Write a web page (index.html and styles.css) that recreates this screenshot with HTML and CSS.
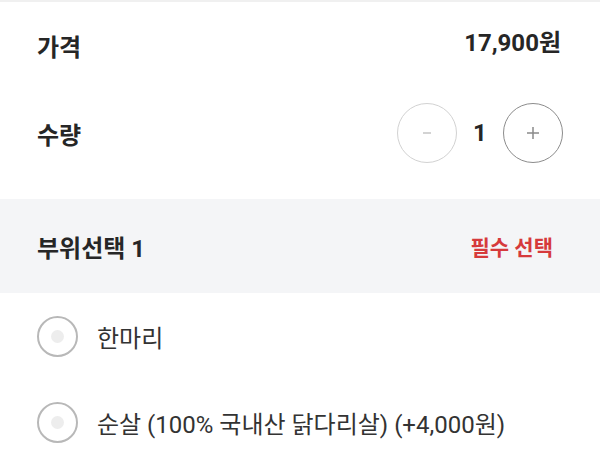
FILE: index.html
```html
<!DOCTYPE html>
<html lang="ko">
<head>
<meta charset="utf-8">
<link rel="stylesheet" href="styles.css">
</head>
<body>
<div class="page">
  <div class="row price-row">
    <span class="label">가격</span>
    <span class="price">17,900원</span>
  </div>
  <div class="row qty-row">
    <span class="label">수량</span>
    <div class="stepper">
      <button class="step step-minus" aria-label="감소">
        <svg width="12" height="12" viewBox="0 0 12 12"><line x1="2" y1="6" x2="10" y2="6" stroke="#c4c4c4" stroke-width="1.5"/></svg>
      </button>
      <span class="count">1</span>
      <button class="step step-plus" aria-label="증가">
        <svg width="14" height="14" viewBox="0 0 14 14"><line x1="1" y1="7" x2="13" y2="7" stroke="#8a8a8a" stroke-width="1.5"/><line x1="7" y1="1" x2="7" y2="13" stroke="#8a8a8a" stroke-width="1.5"/></svg>
      </button>
    </div>
  </div>
  <div class="section-head">
    <span class="section-title">부위선택 1</span>
    <span class="required">필수 선택</span>
  </div>
  <div class="options">
    <label class="option">
      <span class="radio"><span class="dot"></span></span>
      <span class="option-text">한마리</span>
    </label>
    <label class="option">
      <span class="radio"><span class="dot"></span></span>
      <span class="option-text">순살 (100% 국내산 닭다리살) (+4,000원)</span>
    </label>
  </div>
</div>
</body>
</html>
```

FILE: styles.css
```css
* { box-sizing: border-box; }
html, body {
  margin: 0;
  padding: 0;
  background: #ffffff;
}
body {
  font-family: Roboto, "Noto Sans CJK KR", "Noto Sans", sans-serif;
  color: #262626;
  width: 600px;
  height: 452px;
  overflow: hidden;
}
.page {
  border-top: 2px solid #f0f0f0;
}
.row {
  display: flex;
  align-items: center;
  justify-content: space-between;
  padding: 0 39px 0 37px;
}
.price-row { height: 86px; }
.qty-row { height: 90px; margin-bottom: 21px; padding-right: 37px; }
.label {
  font-size: 24px;
  font-weight: 700;
  color: #262626;
}
.price {
  font-size: 24px;
  font-weight: 700;
  margin-bottom: 10px;
  color: #262626;
}
.stepper {
  display: flex;
  align-items: center;
}
.step {
  width: 60px;
  height: 60px;
  border-radius: 50%;
  background: #fff;
  display: flex;
  align-items: center;
  justify-content: center;
  padding: 0;
}
.step-minus { border: 1.5px solid #d2d2d2; }
.step-plus { border: 1.5px solid #8c8c8c; }
.count {
  width: 46px;
  text-align: center;
  font-size: 24px;
  font-weight: 700;
  color: #262626;
}
.section-head {
  height: 94px;
  background: #f4f5f7;
  display: flex;
  align-items: center;
  justify-content: space-between;
  padding: 0 47px 0 37px;
}
.section-title {
  font-size: 24px;
  font-weight: 700;
  color: #262626;
}
.required {
  font-size: 21px;
  font-weight: 700;
  color: #d63a3c;
}
.options {
  padding: 0 37px;
}
.option {
  height: 86px;
  display: flex;
  align-items: center;
}
.radio {
  width: 41px;
  height: 41px;
  border-radius: 50%;
  border: 2px solid #b8b8b8;
  display: flex;
  align-items: center;
  justify-content: center;
  margin-right: 19px;
  flex: none;
}
.dot {
  width: 13px;
  height: 13px;
  border-radius: 50%;
  background: #ededed;
}
.option-text {
  font-size: 24px;
  font-weight: 400;
  color: #333333;
}
```
